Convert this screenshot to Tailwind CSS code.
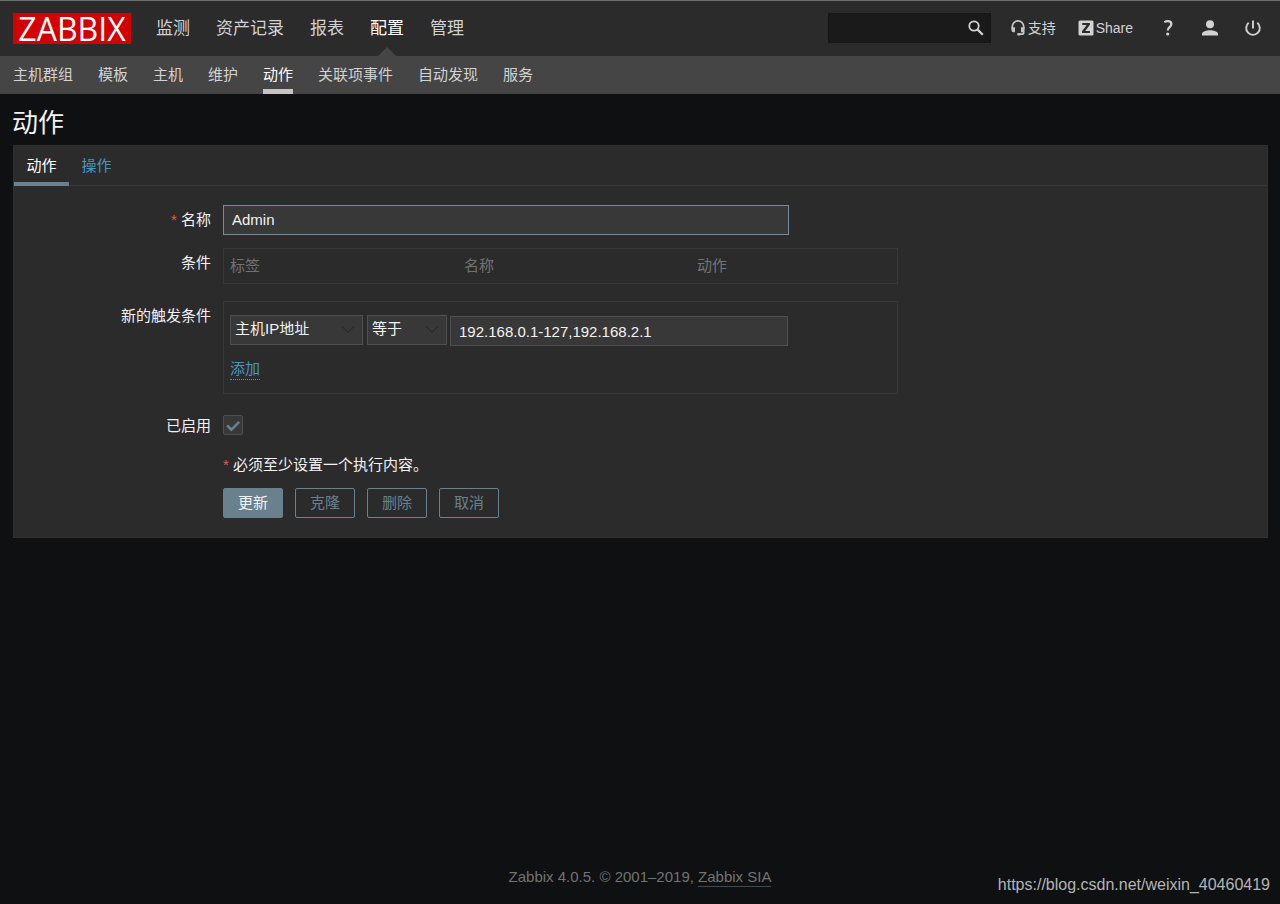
<!DOCTYPE html>
<html lang="zh-CN">
<head>
<meta charset="utf-8">
<meta name="viewport" content="width=device-width, initial-scale=1">
<title>动作</title>
<script src="https://cdn.jsdelivr.net/npm/@tailwindcss/browser@4"></script>
</head>
<body class="relative flex min-h-screen flex-col bg-[#0e1012] font-['Liberation_Sans','Noto_Sans_CJK_SC',sans-serif] text-[15px] leading-5 text-[#f2f2f2]">
<header>
  <div class="flex h-14 items-center border-t border-[#6c6f70] bg-[#2b2b2b] pr-[19px] pl-[13px]">
    <a href="#" class="flex h-[31px] w-[118px] items-center justify-center bg-[#d40000] font-['Open_Sans',sans-serif] text-[32px] leading-8 font-medium text-white">ZABBIX</a>
    <nav aria-label="主菜单" class="ml-[25px] flex h-full items-center gap-[26px] text-[17px] text-[#d2d2d2]">
      <a href="#">监测</a>
      <a href="#">资产记录</a>
      <a href="#">报表</a>
      <a href="#" class="relative flex h-full items-center text-white">配置
        <svg class="absolute bottom-0 left-1/2 -translate-x-1/2" width="18" height="9" viewBox="0 0 18 9" aria-hidden="true"><path d="M0 9 9 0l9 9z" fill="#454545"/></svg>
      </a>
      <a href="#">管理</a>
    </nav>
    <div class="ml-auto flex items-center pb-0.5 text-sm text-[#d2d2d2]">
      <form class="flex h-[30px] w-[163px] items-center border border-[#161616] bg-[#1a1a1a]">
        <input type="text" aria-label="搜索" class="h-full w-0 grow bg-transparent px-2 outline-none">
        <button type="button" aria-label="搜索" class="mr-1.5">
          <svg width="16" height="16" viewBox="0 0 16 16" fill="none" stroke="#d2d2d2"><circle cx="6" cy="6" r="4.7" stroke-width="1.8"/><path d="m9.6 9.6 5.2 5.2" stroke-width="2.2"/></svg>
        </button>
      </form>
      <a href="#" class="ml-[19px] flex items-center gap-[2px]">
        <svg width="16" height="16" viewBox="0 0 16 16" aria-hidden="true"><path d="M2.300 9V6.600a5.700 5.700 0 0 1 11.400 0V9M13.700 11v1.200q0 2-2 2H9.500" fill="none" stroke="#c4c4c4" stroke-width="1.700"/><path d="M1.500 7.300H5v4.900H3.200Q1.500 12 1.300 9.500zM14.500 7.300H11v4.900h1.800Q14.500 12 14.700 9.500z" fill="#c4c4c4"/><rect x="7.200" y="12.900" width="3.600" height="2.600" rx="1" fill="#c4c4c4"/></svg>支持</a>
      <a href="#" class="ml-[22px] flex items-center gap-[2px]">
        <svg width="16" height="16" viewBox="0 0 16 16" aria-hidden="true"><rect x=".5" y=".5" width="15" height="15" rx="1.500" fill="#d2d2d2"/><path d="M4.300 3h7.600v1.800l-4.700 6.200h4.700v2H4v-1.800L8.700 5H4.300z" fill="#2b2b2b"/></svg>Share</a>
      <a href="#" aria-label="帮助" class="ml-[27px]">
        <svg width="16" height="16" viewBox="0 0 16 16" aria-hidden="true"><path d="M4.300 2.100Q6 1.200 7.800 1.200c2.300 0 3.600 1.100 3.600 2.900 0 3-3.700 3.100-3.700 6.500" fill="none" stroke="#d2d2d2" stroke-width="2.200"/><circle cx="7.700" cy="14" r="1.600" fill="#d2d2d2"/></svg>
      </a>
      <a href="#" aria-label="用户" class="ml-[26px]">
        <svg width="16" height="16" viewBox="0 0 16 16" fill="#d2d2d2" aria-hidden="true"><circle cx="8" cy="4.200" r="4"/><path d="M0 15.500v-1.700c0-2.300 4.500-3.600 8-3.600s8 1.300 8 3.600v1.700z"/></svg>
      </a>
      <a href="#" aria-label="退出" class="ml-[27px]">
        <svg width="16" height="16" viewBox="0 0 16 16" fill="none" stroke="#d2d2d2" stroke-width="1.900" aria-hidden="true"><path d="M8 .4v8.200M3.700 2.800a6.800 6.800 0 1 0 8.600 0"/></svg>
      </a>
    </div>
  </div>
  <nav aria-label="配置" class="flex h-[38px] gap-[25px] bg-[#454545] px-[13px] leading-[38px] text-[#d2d2d2]">
    <a href="#">主机群组</a>
    <a href="#">模板</a>
    <a href="#">主机</a>
    <a href="#">维护</a>
    <a href="#" class="border-b-5 border-[#c4c4c4] text-white">动作</a>
    <a href="#">关联项事件</a>
    <a href="#">自动发现</a>
    <a href="#">服务</a>
  </nav>
</header>
<main class="grow px-3">
  <h1 class="pt-[13px] pb-1.5 text-[26px] leading-8 text-[#f2f2f2]">动作</h1>
  <form class="ml-px border border-[#303030] bg-[#2b2b2b]">
    <div role="tablist" class="flex h-10 border-b border-[#383838] leading-10">
      <button type="button" role="tab" aria-selected="true" class="h-10 w-[55px] border-b-4 border-[#69808d] text-white">动作</button>
      <button type="button" role="tab" aria-selected="false" class="h-10 w-[55px] border-b-4 border-transparent text-[#4796c4]">操作</button>
    </div>
    <div class="grid grid-cols-[197px_1fr] gap-x-3 pt-[19px] pb-[19px]">
      <label for="name" class="pt-[5px] text-right"><span class="text-[#e45959]">*</span> 名称</label>
      <input id="name" type="text" value="Admin" class="mb-[13px] h-[30px] w-full max-w-[566px] border border-[#768d99] bg-[#383838] px-2 pb-0.5 outline-none">

      <div class="pt-[5px] text-right">条件</div>
      <div class="mb-[17px] h-9 w-full max-w-[675px] border border-[#383838] pl-1.5">
        <table class="w-full table-fixed text-left text-[#737373]">
          <thead><tr>
            <th class="w-[234px] pt-[7px] font-normal">标签</th>
            <th class="w-[233px] pt-[7px] font-normal">名称</th>
            <th class="pt-[7px] font-normal">动作</th>
          </tr></thead>
        </table>
      </div>

      <div class="pt-[5px] text-right">新的触发条件</div>
      <div class="mb-[21px] w-full max-w-[675px] border border-[#383838] px-1.5 pt-[13px] pb-[13px]">
        <div class="flex">
          <div class="relative">
            <select aria-label="条件类型" class="h-[30px] w-[133px] appearance-none border border-[#4f4f4f] bg-[#383838] pr-6 pb-[3px] pl-1 outline-none"><option>主机IP地址</option></select>
            <svg class="pointer-events-none absolute top-2.5 right-2" width="14" height="9" viewBox="0 0 14 9" fill="none" stroke="#222" aria-hidden="true"><path d="m.5 1 6.500 6.500L13.500 1"/></svg>
          </div>
          <div class="relative ml-1">
            <select aria-label="运算符" class="h-[30px] w-20 appearance-none border border-[#4f4f4f] bg-[#383838] pr-6 pb-[3px] pl-1 outline-none"><option>等于</option></select>
            <svg class="pointer-events-none absolute top-2.5 right-2" width="14" height="9" viewBox="0 0 14 9" fill="none" stroke="#222" aria-hidden="true"><path d="m.5 1 6.500 6.500L13.500 1"/></svg>
          </div>
          <input type="text" aria-label="值" value="192.168.0.1-127,192.168.2.1" class="mt-px ml-[3px] h-[30px] w-[338px] border border-[#4f4f4f] bg-[#383838] px-2 outline-none">
        </div>
        <button type="button" class="mt-[13px] block border-b border-dotted border-[#4796c4] leading-5 text-[#4796c4]">添加</button>
      </div>

      <label for="enabled" class="pt-px text-right">已启用</label>
      <div class="relative size-5">
        <input id="enabled" type="checkbox" checked class="peer block size-5 appearance-none rounded-xs border border-[#4f4f4f] bg-[#383838]">
        <svg class="pointer-events-none absolute inset-0 hidden peer-checked:block" width="20" height="20" viewBox="0 0 20 20" fill="none" stroke="#69808d" stroke-width="2.600" aria-hidden="true"><path d="m4.200 10.500 4.200 4.200 7.800-7.800"/></svg>
      </div>

      <div class="col-start-2 mt-[19px]"><span class="text-[#e45959]">*</span> 必须至少设置一个执行内容。</div>

      <div class="col-start-2 mt-[13px] flex gap-3 text-[#69808d]">
        <button type="button" class="h-[30px] w-[60px] rounded-xs border border-[#69808d] bg-[#69808d] text-[#f2f2f2]">更新</button>
        <button type="button" class="h-[30px] w-[60px] rounded-xs border border-[#69808d]">克隆</button>
        <button type="button" class="h-[30px] w-[60px] rounded-xs border border-[#69808d]">删除</button>
        <button type="button" class="h-[30px] w-[60px] rounded-xs border border-[#69808d]">取消</button>
      </div>
    </div>
  </form>
</main>
<footer class="pb-[17px] text-center text-[#737373]">Zabbix 4.0.5. © 2001–2019, <a href="#" class="border-b border-[#3f4b52] pb-px">Zabbix SIA</a></footer>
<div class="absolute right-2.5 bottom-[9px] text-base leading-5 text-[#b4b4b4]">https://blog.csdn.net/weixin_40460419</div>
</body>
</html>
